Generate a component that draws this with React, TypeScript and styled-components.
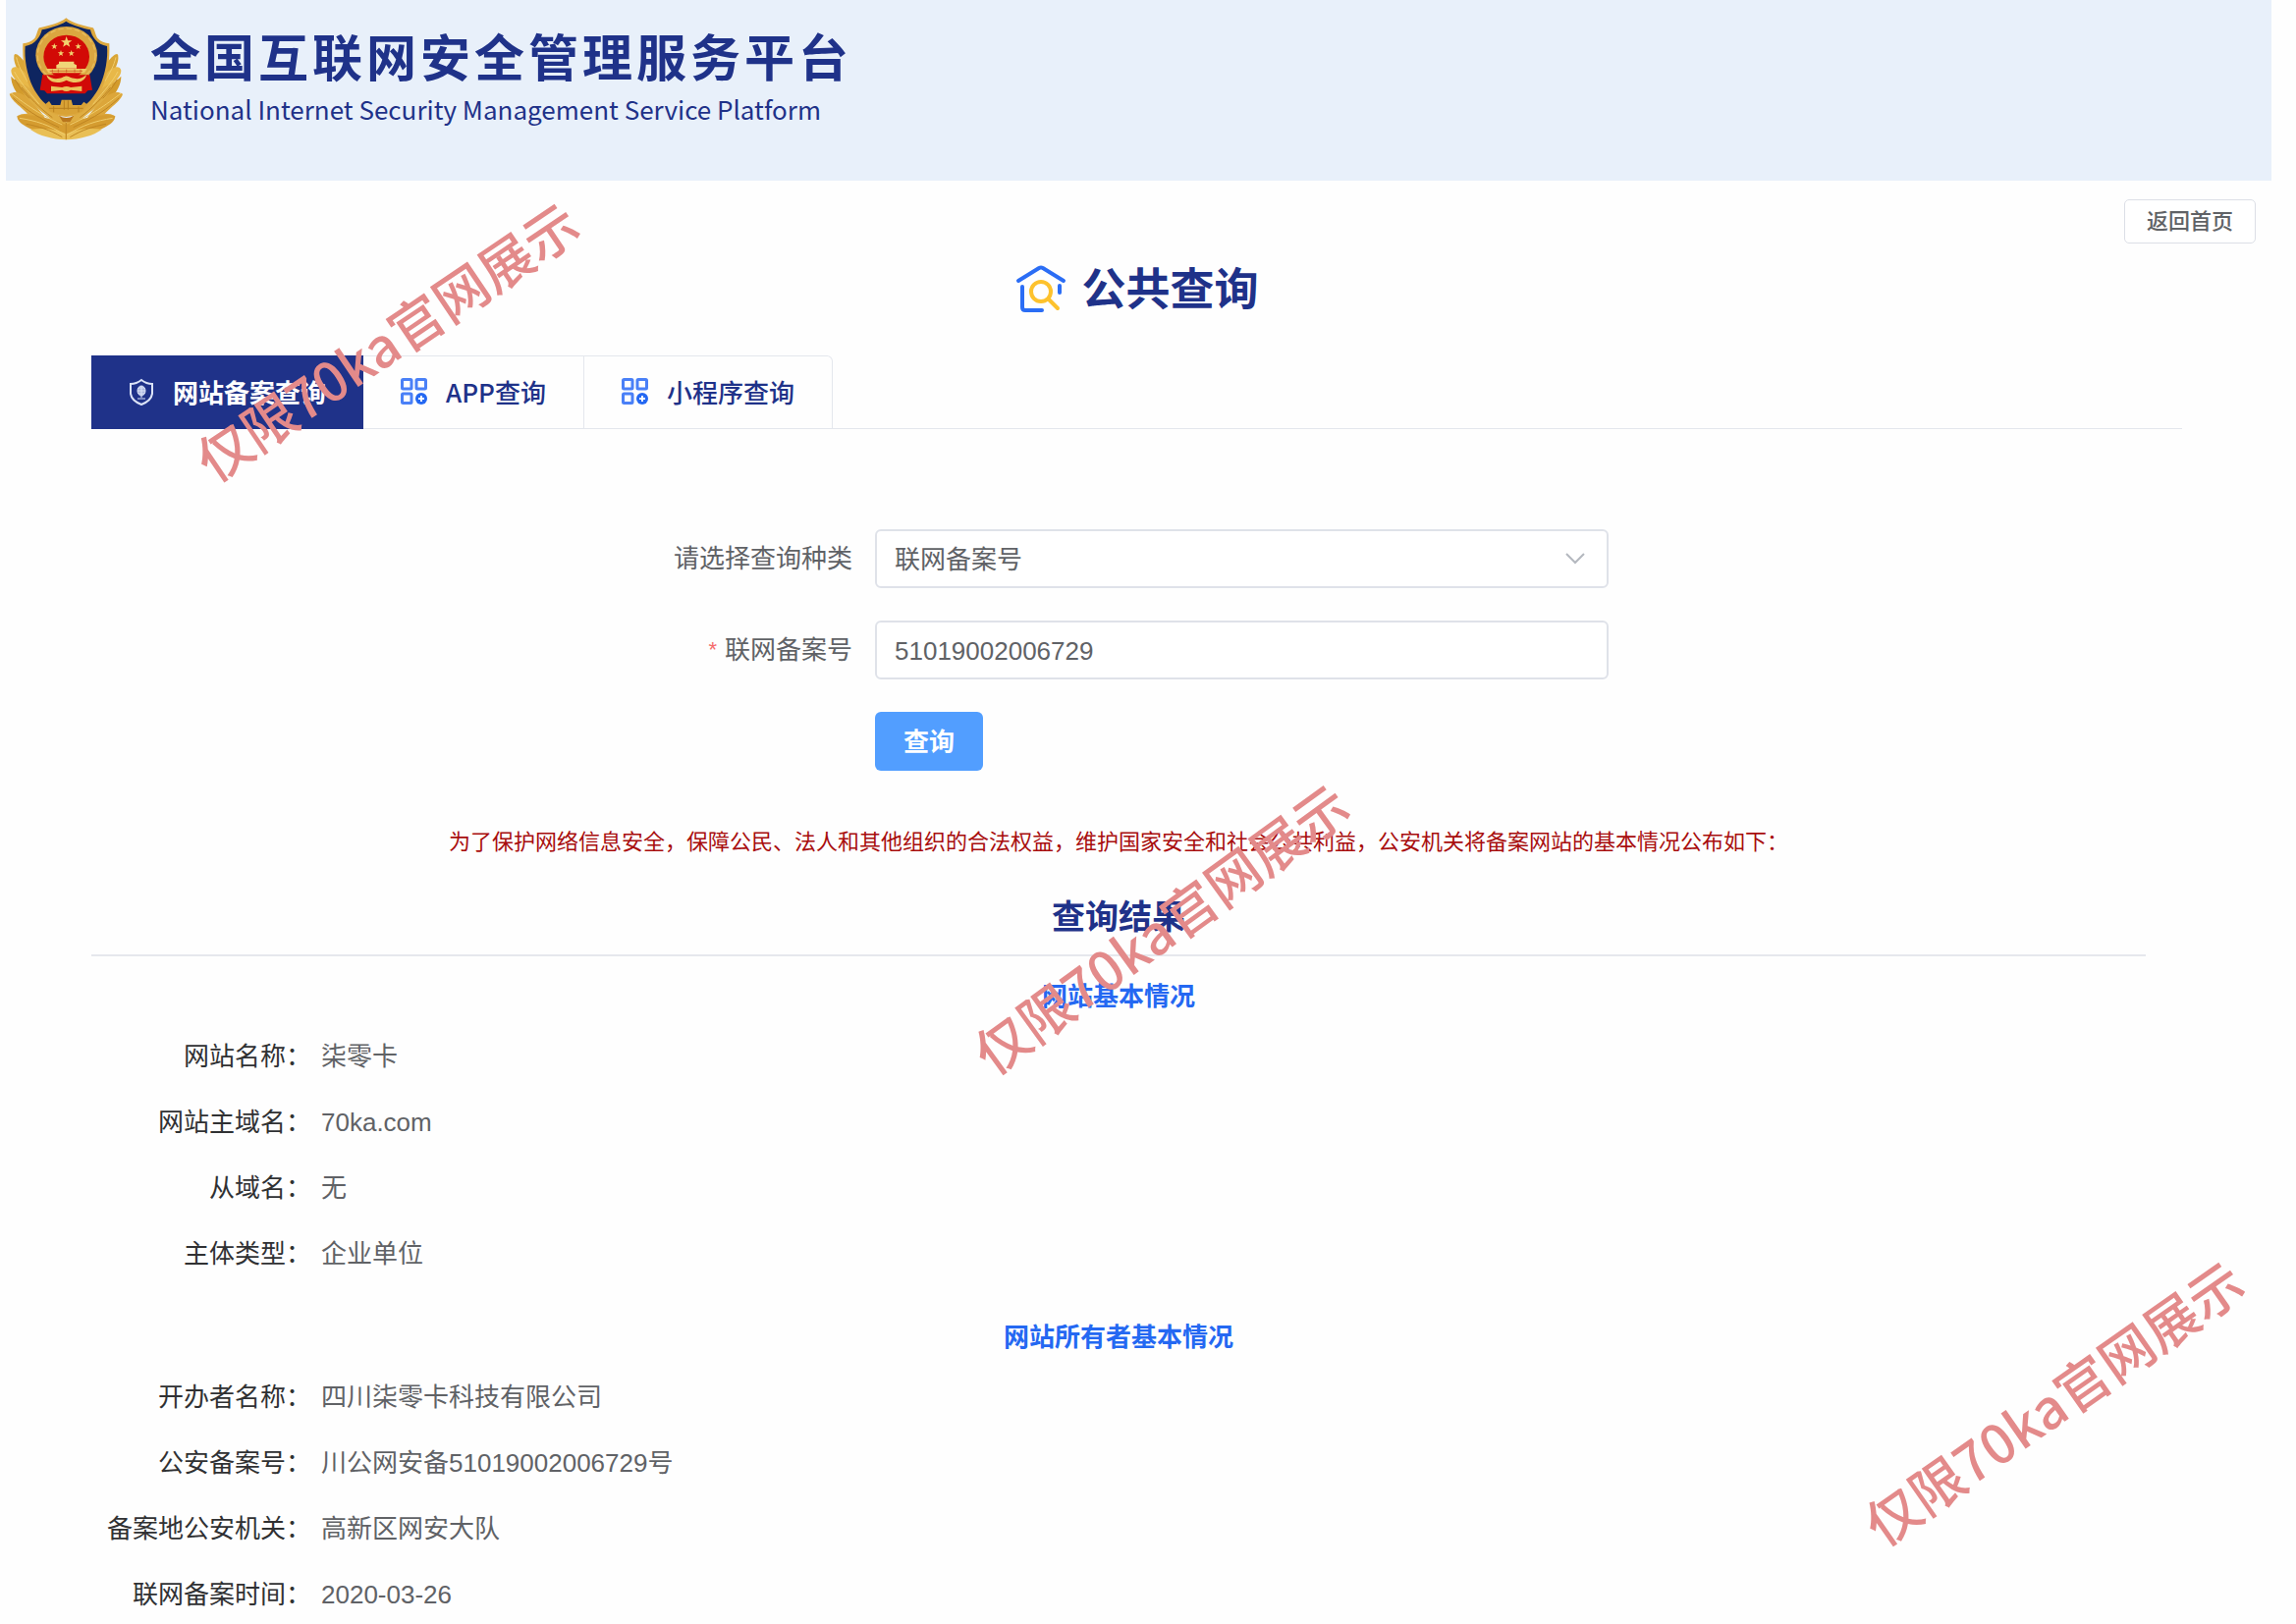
import React, { useState } from "react";
import styled, { createGlobalStyle } from "styled-components";

const navy = "#1f3289";
const blue = "#2468f2";
const line = "#e4e7ed";
const cjk = '"Noto Sans CJK SC", sans-serif';

const GlobalStyle = createGlobalStyle`
  *, *::before, *::after { box-sizing: border-box; }
  body {
    margin: 0;
    background: #fefefe;
    color: #606266;
    font-family: "Liberation Sans", ${cjk};
    font-size: 26px;
    line-height: 40px;
  }
  h1, h2, h3, p, dl, dd { margin: 0; }
  button, input, select { font: inherit; }
`;

const Page = styled.div`
  position: relative;
  overflow: hidden;
  padding: 0 25px 0 6px;
`;

const Header = styled.header`
  display: flex;
  align-items: flex-start;
  gap: 27px;
  min-height: 184px;
  padding: 17px 3px;
  background: #e8f0fa;
  color: ${navy};
  font-family: ${cjk};
`;

const Brand = styled.div`
  display: flex;
  flex-direction: column;
  gap: 9px;
  padding-top: 13px;
`;

const BrandName = styled.h1`
  font-size: 51px;
  line-height: 52px;
  font-weight: 700;
  letter-spacing: 4px;
`;

const BrandSub = styled.p`
  font-size: 26px;
  line-height: 40px;
`;

const TopBar = styled.div`
  display: flex;
  justify-content: flex-end;
  padding: 19px 16px 16px;
`;

const BackButton = styled.button`
  height: 45px;
  padding: 0 22px;
  border: 1px solid #dcdfe6;
  border-radius: 5px;
  background: #fff;
  color: #606266;
  font-size: 22px;
  font-weight: 500;
  line-height: 32px;
  cursor: pointer;
`;

const PageTitle = styled.h2`
  display: flex;
  justify-content: center;
  align-items: center;
  gap: 14px;
  margin-bottom: 34px;
  padding-right: 4px;
  color: ${navy};
  font-size: 45px;
  font-weight: 700;
  line-height: 64px;
`;

const Main = styled.main`
  padding: 0 91px 0 87px;
`;

const TabBar = styled.div`
  display: flex;
  margin-bottom: 102px;
  border-bottom: 1px solid ${line};
`;

const Tab = styled.button<{ $active: boolean }>`
  display: flex;
  align-items: center;
  gap: 19px;
  height: 75px;
  padding: 0 ${(p) => (p.$active ? "37px" : "38px")} 2px;
  margin-bottom: -1px;
  border: 1px solid ${(p) => (p.$active ? navy : line)};
  border-left-width: ${(p) => (p.$active ? "1px" : "0")};
  background: ${(p) => (p.$active ? navy : "#fefefe")};
  color: ${(p) => (p.$active ? "#fff" : navy)};
  font-family: ${cjk};
  font-weight: ${(p) => (p.$active ? 700 : 500)};
  cursor: pointer;
  &:last-child { border-top-right-radius: 6px; }
`;

const Form = styled.form`
  display: grid;
  grid-template-columns: 191px minmax(0, 747px);
  justify-content: center;
  column-gap: 23px;
  row-gap: 33px;
  margin-bottom: 56px;
`;

const Label = styled.label`
  display: flex;
  justify-content: flex-end;
  gap: 8px;
  line-height: 60px;
`;

const Required = styled.span`
  color: #f56c6c;
  font-size: 22px;
`;

const SelectBox = styled.div`
  display: grid;
  grid-template-columns: 1fr 44px;
  align-items: center;
  & > select { grid-area: 1 / 1 / 2 / 3; }
  & > svg { grid-area: 1 / 2 / 2 / 3; pointer-events: none; }
`;

const Select = styled.select`
  appearance: none;
  width: 100%;
  height: 60px;
  padding: 1px 45px 0 18px;
  border: 2px solid #dfe2e9;
  border-radius: 6px;
  background: #fff;
  color: #606266;
`;

const Input = styled.input`
  width: 100%;
  height: 60px;
  padding: 2px 18px 0;
  border: 2px solid #dfe2e9;
  border-radius: 6px;
  background: #fff;
  color: #606266;
`;

const Submit = styled.button`
  grid-column: 2;
  justify-self: start;
  height: 60px;
  padding: 2px 29px 0;
  border: 0;
  border-radius: 6px;
  background: #529eff;
  color: #fff;
  font-weight: 700;
  cursor: pointer;
`;

const Results = styled.section`
  padding-right: 37px;
`;

const Notice = styled.p`
  color: #a80d0d;
  font-size: 22px;
  line-height: 34px;
  text-align: center;
`;

const ResultTitle = styled.h2`
  margin: 35px 0 21px;
  padding-bottom: 14px;
  border-bottom: 2px solid #e6e8ed;
  color: ${navy};
  font-size: 34px;
  font-weight: 700;
  line-height: 48px;
  text-align: center;
`;

const Group = styled.section`
  & + & { margin-top: 45px; }
`;

const GroupTitle = styled.h3`
  margin-bottom: 21px;
  color: ${blue};
  font-size: 26px;
  font-weight: 700;
  text-align: center;
`;

const Fields = styled.dl`
  display: grid;
  grid-template-columns: 224px 1fr;
  column-gap: 10px;
  row-gap: 27px;
`;

const Term = styled.dt`
  color: #303133;
  text-align: right;
`;

const Watermark = styled.span<{ $x: number; $y: number; $angle: number }>`
  position: absolute;
  left: ${(p) => p.$x}px;
  top: ${(p) => p.$y}px;
  transform: translate(-50%, -50%) rotate(${(p) => p.$angle}deg);
  color: #e38a8a;
  font-family: ${cjk};
  font-size: 55px;
  font-weight: 500;
  line-height: 60px;
  white-space: nowrap;
  pointer-events: none;
`;

const STAR = "M0-10 2.4-3.1 9.5-3.1 3.8 1.2 5.9 8.1 0 4-5.9 8.1-3.8 1.2-9.5-3.1-2.4-3.1Z";

const Wreath = () => (
  <g>
    <path d="M75 160C58 138 42 128 43 144 41 158 50 178 62 200L90 240Z" fill="#d9a536" />
    <path d="M80 196C58 172 38 170 34 186 34 204 52 220 74 240L100 260Z" fill="#e8b848" />
    <path d="M96 270C68 224 46 218 34 204 34 228 44 250 78 290Z" fill="#d39b2c" />
    <path d="M52 326C60 320 70 318 84 318L60 296C44 282 32 270 29 258 60 240 92 270 130 320L150 352Z" fill="#dca63a" />
    <path d="M150 330C110 300 70 268 60 230 84 222 110 262 160 310L202 340V396Z" fill="#dfad42" />
    <path d="M202 352C140 326 84 318 52 326 54 352 94 372 202 398Z" fill="#d59c30" />
    <path d="M202 398C160 396 120 386 92 366 130 360 176 366 202 380Z" fill="#e9bf55" />
    <path d="M34 256C70 282 110 316 190 352M60 332C110 340 150 352 200 384M44 190C60 220 80 242 120 290M50 146C56 172 66 190 84 220" fill="none" stroke="#f0cd6c" strokeWidth="3" />
    <path d="M40 270C74 302 110 328 180 360M80 350C120 358 150 366 190 390M66 238C90 268 120 300 160 330M46 214C58 236 70 250 90 272" fill="none" stroke="#bf8522" strokeWidth="3" />
  </g>
);

const Emblem = () => (
  <svg width="117" height="126" viewBox="27 22 351 378" role="img" aria-label="警徽">
    <Wreath />
    <g transform="matrix(-1 0 0 1 404 0)"><Wreath /></g>
    <path d="M202 26C222 42 254 50 284 56 290 62 290 76 298 88 308 98 320 102 334 104 336 150 330 200 312 240 296 276 276 296 252 312 232 324 216 326 202 328 188 326 172 324 152 312 128 296 108 276 92 240 74 200 68 150 70 104 84 102 96 98 106 88 114 76 114 62 120 56 150 50 182 42 202 26Z" fill="#dda83e" />
    <path d="M202 36C224 50 252 56 276 62 280 82 296 108 327 112 330 150 322 198 304 236 290 264 272 286 250 300H154C132 286 114 264 100 236 82 198 74 150 77 112 108 108 124 82 128 62 152 56 180 50 202 36Z" fill="#0e2560" />
    <path d="M130 198 122 246 136 248 144 257H260L268 248 282 246 274 198Z" fill="#d10a08" />
    <ellipse cx="203" cy="140" rx="94" ry="88" fill="#dba640" />
    <ellipse cx="203" cy="140" rx="88" ry="82" fill="none" stroke="#e6bd5c" strokeWidth="4" strokeDasharray="16 9" />
    <ellipse cx="203" cy="144" rx="70" ry="66" fill="#d20a06" />
    <path d="M136 200H270L280 244 266 247 258 256H148L140 247 124 244Z" fill="#d10a08" />
    <path d={STAR} transform="translate(203 100) scale(1.8)" fill="#f2d36e" />
    {[[166, 113], [239, 113], [186, 134], [218, 134]].map(([x, y]) => (
      <path key={x} d={STAR} transform={`translate(${x} ${y})`} fill="#f2d36e" />
    ))}
    <path d="M180 159H226V166L234 170V180H172V170L180 166Z" fill="#f0d578" />
    <path d="M140 181H266L258 194H148Z" fill="#edc863" />
    <path d="M152 188H252M160 183V192M178 183V192M203 183V192M228 183V192M246 183V192" stroke="#c8461b" strokeWidth="2" />
    <path d="M142 200C160 216 178 212 190 208 200 202 208 202 216 208 230 212 246 216 264 200 258 226 226 228 203 216 180 228 148 226 142 200Z" fill="#edc660" />
    <path d="M156 234 190 238Q203 232 216 238L250 234V250L216 246Q203 254 190 246L156 250Z" fill="#ebc25a" />
    <path d="M138 290 150 280 158 292H184L188 276H218L222 292H248L256 282 266 290 250 312Q203 330 154 312Z" fill="#d9a236" />
    <path d="M196 278V306M208 278V306M164 296V314M240 296V314M150 302 254 302" stroke="#b9801f" strokeWidth="3" />
    <path d="M180 324Q203 338 226 324L214 344H192Z" fill="#b9761d" />
    <path d="M202 346V396" stroke="#c58c28" strokeWidth="4" />
  </svg>
);

const HouseSearchIcon = () => (
  <svg width="54" height="54" viewBox="0 0 54 54" fill="none" strokeLinecap="round" strokeWidth="4" aria-hidden="true">
    <path d="M4 17 25 4Q27 3 29 4L50 17" stroke="#2b6df5" />
    <path d="M8 23V44Q8 47 11 47H28" stroke="#2b6df5" />
    <path d="M46 22V29" stroke="#2b6df5" />
    <circle cx="27" cy="28" r="10" stroke="#fdc22d" />
    <path d="M35 36 44 45" stroke="#fdc22d" />
  </svg>
);

const ShieldIcon = () => (
  <svg width="26" height="28" viewBox="0 0 26 28" fill="none" stroke="#dbe3f7" aria-hidden="true">
    <path d="M13 2Q18 6 24 6V16Q23 23 13 27 3 23 2 16V6Q8 6 13 2Z" strokeWidth="2" />
    <ellipse cx="13" cy="13" rx="4" ry="5" fill="#a9b5dc" strokeWidth="1" />
    <path d="M9 13H17M13 8V20M9 21H17M10 10H16M10 16H16" strokeWidth="1" />
  </svg>
);

const GridIcon = () => (
  <svg width="27" height="27" viewBox="0 0 27 27" fill="none" stroke="#4a80f7" strokeWidth="3" aria-hidden="true">
    <rect x="1.5" y="1.5" width="9.5" height="9.5" rx="1" />
    <rect x="16" y="1.5" width="9.5" height="9.5" rx="1" />
    <rect x="1.5" y="16" width="9.5" height="9.5" rx="1" />
    <circle cx="21" cy="21" r="6" fill={blue} stroke="none" />
    <path d="M21 18V24M18 21H24" stroke="#fff" strokeWidth="2" />
  </svg>
);

const Chevron = () => (
  <svg width="22" height="14" viewBox="0 0 22 14" fill="none" stroke="#b4b8bf" strokeWidth="2" aria-hidden="true">
    <path d="M1 2 10 11 19 2" />
  </svg>
);

const TABS = [
  { name: "网站备案查询", icon: <ShieldIcon /> },
  { name: "APP查询", icon: <GridIcon /> },
  { name: "小程序查询", icon: <GridIcon /> },
];

const GROUPS = [
  {
    title: "网站基本情况",
    fields: [
      ["网站名称", "柒零卡"],
      ["网站主域名", "70ka.com"],
      ["从域名", "无"],
      ["主体类型", "企业单位"],
    ],
  },
  {
    title: "网站所有者基本情况",
    fields: [
      ["开办者名称", "四川柒零卡科技有限公司"],
      ["公安备案号", "川公网安备51019002006729号"],
      ["备案地公安机关", "高新区网安大队"],
      ["联网备案时间", "2020-03-26"],
    ],
  },
];

const MARKS = [
  { x: 393, y: 346, angle: -34 },
  { x: 1181, y: 944, angle: -36 },
  { x: 2090, y: 1427, angle: -35 },
];

export default function App() {
  const [tab, setTab] = useState(0);
  const [code, setCode] = useState("51019002006729");

  return (
    <Page lang="zh-CN">
      <GlobalStyle />
      <Header>
        <Emblem />
        <Brand>
          <BrandName>全国互联网安全管理服务平台</BrandName>
          <BrandSub>National Internet Security Management Service Platform</BrandSub>
        </Brand>
      </Header>
      <TopBar>
        <BackButton type="button">返回首页</BackButton>
      </TopBar>
      <PageTitle>
        <HouseSearchIcon />
        公共查询
      </PageTitle>
      <Main>
        <TabBar role="tablist">
          {TABS.map((t, i) => (
            <Tab key={t.name} type="button" role="tab" aria-selected={tab === i} $active={tab === i} onClick={() => setTab(i)}>
              {t.icon}
              {t.name}
            </Tab>
          ))}
        </TabBar>
        <Form onSubmit={(e) => e.preventDefault()}>
          <Label htmlFor="kind">请选择查询种类</Label>
          <SelectBox>
            <Select id="kind">
              <option>联网备案号</option>
            </Select>
            <Chevron />
          </SelectBox>
          <Label htmlFor="code">
            <Required>*</Required>联网备案号
          </Label>
          <Input id="code" type="text" required value={code} onChange={(e) => setCode(e.target.value)} />
          <Submit type="submit">查询</Submit>
        </Form>
        <Results>
          <Notice>
            为了保护网络信息安全，保障公民、法人和其他组织的合法权益，维护国家安全和社会公共利益，公安机关将备案网站的基本情况公布如下：
          </Notice>
          <ResultTitle>查询结果</ResultTitle>
          {GROUPS.map((g) => (
            <Group key={g.title}>
              <GroupTitle>{g.title}</GroupTitle>
              <Fields>
                {g.fields.map(([name, value]) => (
                  <React.Fragment key={name}>
                    <Term>{name}：</Term>
                    <dd>{value}</dd>
                  </React.Fragment>
                ))}
              </Fields>
            </Group>
          ))}
        </Results>
      </Main>
      {MARKS.map((m) => (
        <Watermark key={m.x} $x={m.x} $y={m.y} $angle={m.angle} aria-hidden="true">
          仅限70ka官网展示
        </Watermark>
      ))}
    </Page>
  );
}
